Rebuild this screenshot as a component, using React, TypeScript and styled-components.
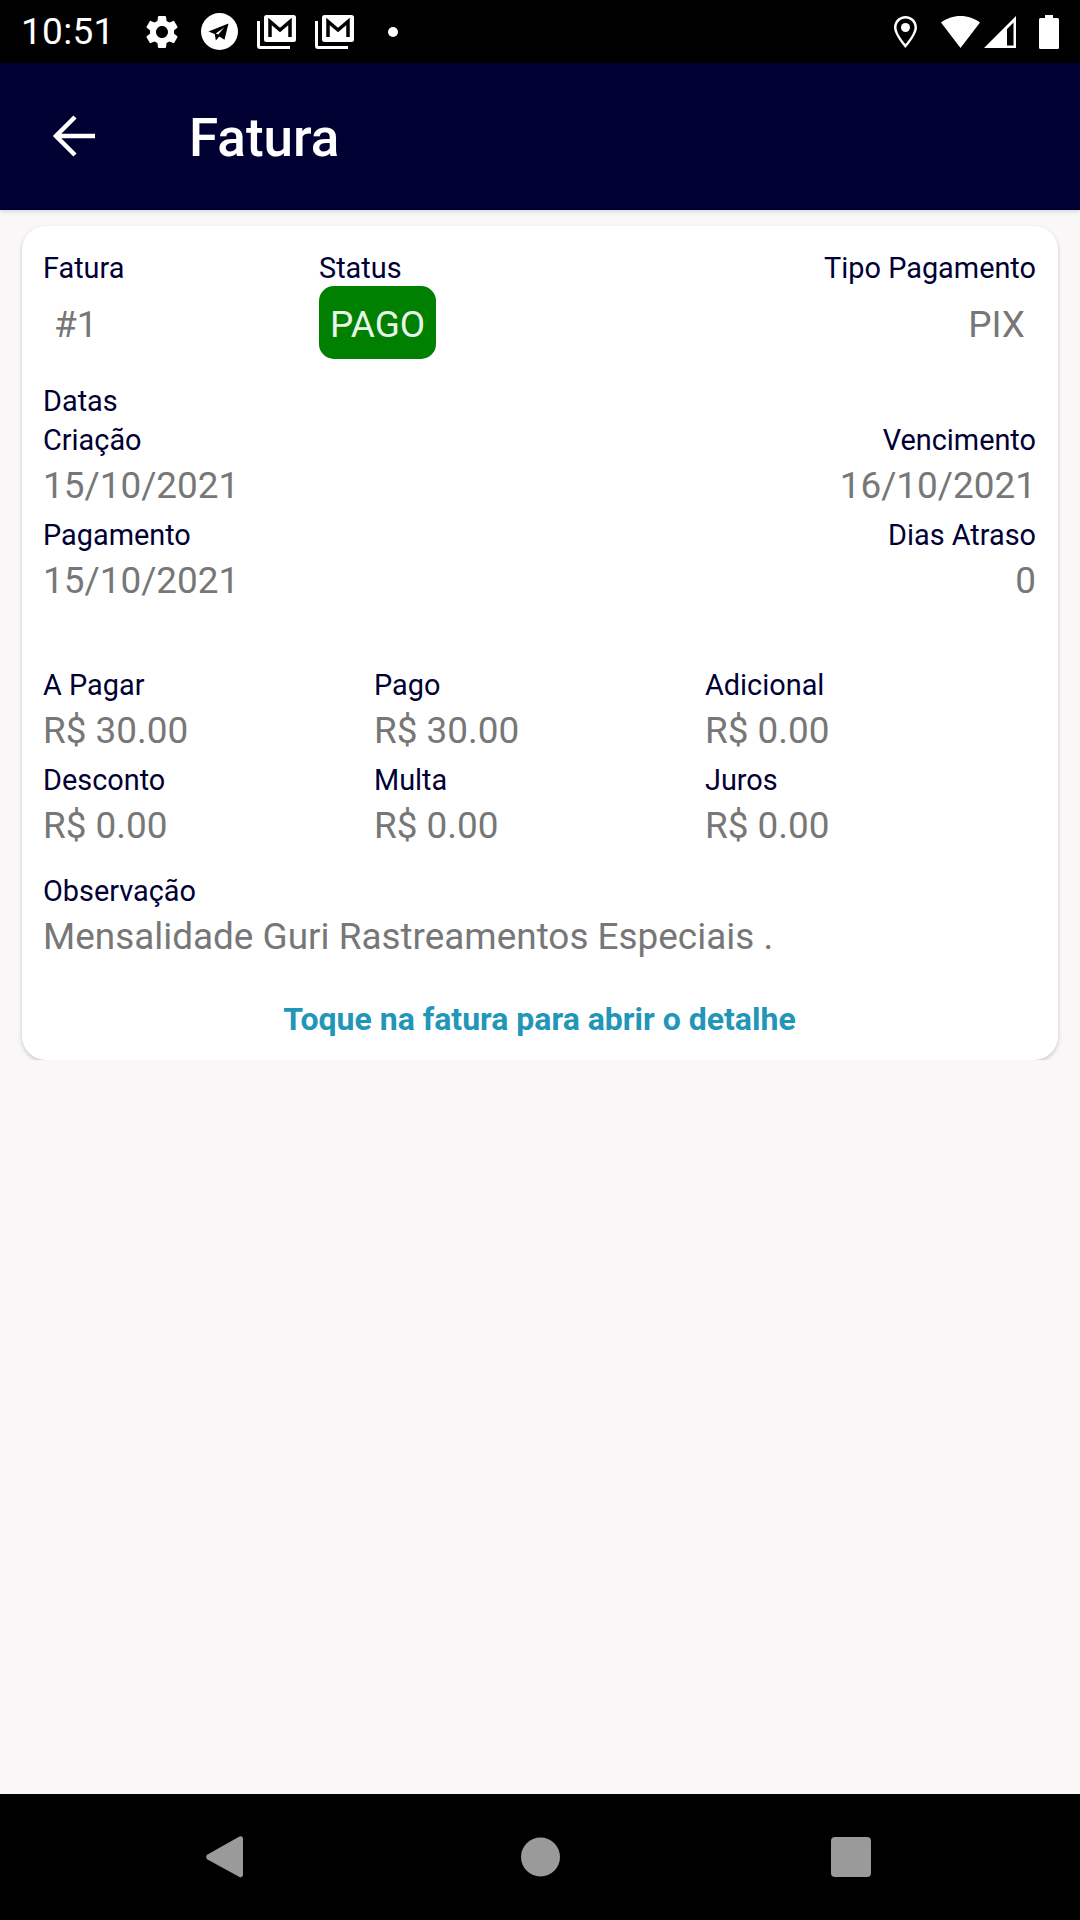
import React from "react";
import styled, { createGlobalStyle } from "styled-components";

const Global = createGlobalStyle`
  html, body { margin: 0; padding: 0; background: #f9f7f8; }
  body { font-family: Roboto, "Liberation Sans", sans-serif; }
`;

const Screen = styled.div`
  width: 1080px;
  height: 1920px;
  display: flex;
  flex-direction: column;
  background: #f9f7f8;
  overflow: hidden;
`;

const StatusBar = styled.div`
  height: 63px;
  flex: none;
  background: #000;
  color: #fff;
  display: flex;
  align-items: center;
  padding: 0 21px 0 21px;
  box-sizing: border-box;
`;

const Clock = styled.span`
  font-size: 37px;
  line-height: 63px;
  width: 121px;
  letter-spacing: 0.3px;
`;

const StatusGroup = styled.div<{ $gap: number }>`
  display: flex;
  align-items: center;
  gap: ${(p) => p.$gap}px;
`;

const Spacer = styled.div`
  flex: 1;
`;

const NotifDot = styled.span`
  width: 10px;
  height: 10px;
  margin-left: 34px;
  border-radius: 50%;
  background: #fff;
`;

const Header = styled.header`
  height: 147px;
  flex: none;
  background: #000033;
  color: #fff;
  display: flex;
  align-items: center;
  padding-left: 53px;
  box-shadow: 0 2px 4px rgba(0, 0, 0, 0.12);
  z-index: 1;
`;

const BackIcon = styled.svg`
  width: 42px;
  height: 42px;
  margin-right: 94px;
  margin-top: -2px;
`;

const Title = styled.h1`
  margin: 2px 0 0;
  font-size: 53px;
  font-weight: 500;
  line-height: 62px;
`;

const Main = styled.main`
  flex: 1;
  padding: 16px 22px 0;
`;

const Card = styled.section`
  height: 834px;
  box-sizing: border-box;
  background: #fff;
  border-radius: 24px;
  padding: 23px 22px 0 21px;
  box-shadow: 0 2px 4px rgba(0, 0, 0, 0.2);
  clip-path: inset(-8px -8px 0 -8px round 0);
`;

const TopRow = styled.div`
  display: grid;
  grid-template-columns: 276px auto 1fr;
  height: 133px;
`;

const Column = styled.div<{ $end?: boolean }>`
  display: flex;
  flex-direction: column;
  align-items: ${(p) => (p.$end ? "flex-end" : "flex-start")};
`;

const Label = styled.div`
  font-size: 28.875px;
  line-height: 39px;
  color: #000033;
  white-space: nowrap;
`;

const Value = styled.div<{ $inset?: boolean }>`
  font-size: 36.9px;
  line-height: 51px;
  color: #777777;
  white-space: nowrap;
  ${(p) => p.$inset && "padding: 11px 11px 11px 11px;"}
`;

const Badge = styled.div`
  margin-top: -2px;
  height: 73px;
  box-sizing: border-box;
  padding: 3px 11px 0;
  display: flex;
  align-items: center;
  background: #008000;
  border-radius: 15px;
  color: #e8f5e8;
  font-size: 36.9px;
`;

const SplitRow = styled.div`
  display: flex;
  justify-content: space-between;
  margin-bottom: 5px;
`;

const ThreeCol = styled.div`
  display: grid;
  grid-template-columns: 331px 331px 1fr;
  margin-bottom: 5px;
`;

const AmountBlock = styled.div`
  margin-top: 60px;
`;

const Note = styled.div`
  margin-top: 21px;
`;

const Hint = styled.div`
  margin-top: 38px;
  text-align: center;
  font-size: 32px;
  font-weight: 700;
  line-height: 38px;
  color: #2196b8;
`;

const NavBar = styled.nav`
  height: 126px;
  flex: none;
  background: #000;
  display: flex;
  justify-content: space-between;
  align-items: center;
  padding: 0 169px 0 166px;
  box-sizing: border-box;
`;

const NavIcon = styled.svg`
  width: 120px;
  height: 60px;
  fill: #9a9a9a;
  stroke: none;
`;

const White = styled.svg<{ $w: number; $h: number }>`
  width: ${(p) => p.$w}px;
  height: ${(p) => p.$h}px;
  flex: none;
  fill: #fff;
`;

const Gap = styled.span<{ $w: number }>`
  width: ${(p) => p.$w}px;
`;

const GEAR =
  "M19.14,12.94c0.04-0.3,0.06-0.61,0.06-0.94c0-0.32-0.02-0.64-0.07-0.94l2.03-1.58c0.18-0.14,0.23-0.41,0.12-0.61l-1.92-3.32c-0.12-0.22-0.37-0.29-0.59-0.22l-2.39,0.96c-0.5-0.38-1.03-0.7-1.62-0.94L14.4,2.81c-0.04-0.24-0.24-0.41-0.48-0.41h-3.84c-0.24,0-0.43,0.17-0.47,0.41L9.25,5.35C8.66,5.59,8.12,5.92,7.63,6.29L5.24,5.33c-0.22-0.08-0.47,0-0.59,0.22L2.74,8.87C2.62,9.08,2.66,9.34,2.86,9.48l2.03,1.58C4.84,11.36,4.8,11.69,4.8,12s0.02,0.64,0.07,0.94l-2.03,1.58c-0.18,0.14-0.23,0.41-0.12,0.61l1.92,3.32c0.12,0.22,0.37,0.29,0.59,0.22l2.39-0.96c0.5,0.38,1.03,0.7,1.62,0.94l0.36,2.54c0.05,0.24,0.24,0.41,0.48,0.41h3.84c0.24,0,0.44-0.17,0.47-0.41l0.36-2.54c0.59-0.24,1.13-0.56,1.62-0.94l2.39,0.96c0.22,0.08,0.47,0,0.59-0.22l1.92-3.32c0.12-0.22,0.07-0.47-0.12-0.61L19.14,12.94z M12,15.6c-1.98,0-3.6-1.62-3.6-3.6s1.62-3.6,3.6-3.6s3.6,1.62,3.6,3.6S13.98,15.6,12,15.6z";

const Gear = () => (
  <White $w={40} $h={40} viewBox="0 0 24 24">
    <path d={GEAR} />
  </White>
);

const Telegram = () => (
  <White $w={37} $h={37} viewBox="0 0 37 37">
    <path
      fillRule="evenodd"
      d="M18.5 0a18.5 18.5 0 1 0 0 37a18.5 18.5 0 0 0 0-37z M27.5 10.5L7.5 18.5l6.2 2.4 1.2 6.6 3.4-4 5.2 3.2z M14.8 20.6l8.4-6.2-6 7.2z"
    />
  </White>
);

const MailStack = () => (
  <White $w={39} $h={34} viewBox="0 0 39 34">
    <rect x="7" y="0" width="32" height="27" rx="2.500" />
    <path d="M13 22V6.500l10 8.500 10-8.500V22" fill="none" stroke="#000" strokeWidth="3.500" strokeLinejoin="miter" />
    <path d="M0 6h3v25h30v3H3a3 3 0 0 1-3-3z" />
  </White>
);

const Pin = () => (
  <White $w={23} $h={32} viewBox="0 0 23 32">
    <path
      fillRule="evenodd"
      d="M11.500 0C5 0 0 5 0 11.500C0 19 11.500 32 11.500 32S23 19 23 11.500C23 5 18 0 11.500 0z M11.500 2.500c5 0 9 4 9 9c0 5-6 13.500-9 16.500c-3-3-9-11.500-9-16.500c0-5 4-9 9-9z"
    />
    <circle cx="11.500" cy="11.500" r="4.500" />
  </White>
);

const Wifi = () => (
  <White $w={39} $h={32} viewBox="0 0 39 32">
    <path d="M19.500 0C12 0 5.500 2.500 0 6.500L19.500 32L39 6.500C33.500 2.500 27 0 19.500 0z" />
  </White>
);

const Signal = () => (
  <White $w={32} $h={32} viewBox="0 0 32 32">
    <path fillRule="evenodd" d="M32 0V32H0z M29.500 6.500L23 13V29.500H29.500z" />
  </White>
);

const Battery = () => (
  <White $w={20} $h={34} viewBox="0 0 20 34">
    <path d="M6 0h8v3h4.500a1.500 1.500 0 0 1 1.500 1.500v28a1.500 1.500 0 0 1-1.500 1.500H1.500A1.500 1.500 0 0 1 0 32.500v-28A1.500 1.500 0 0 1 1.500 3H6z" />
  </White>
);

const Field = ({ label, value, end }: { label: string; value: string; end?: boolean }) => (
  <Column $end={end}>
    <Label>{label}</Label>
    <Value>{value}</Value>
  </Column>
);

export default function App() {
  return (
    <>
      <Global />
      <Screen>
        <StatusBar>
          <Clock>10:51</Clock>
          <StatusGroup $gap={19}>
            <Gear />
            <Telegram />
            <MailStack />
            <MailStack />
          </StatusGroup>
          <NotifDot />
          <Spacer />
          <StatusGroup $gap={4}>
            <Pin />
            <Gap $w={16} />
            <Wifi />
            <Signal />
            <Gap $w={15} />
            <Battery />
          </StatusGroup>
        </StatusBar>
        <Header>
          <BackIcon viewBox="0 0 42 42" fill="none" stroke="#fff" strokeWidth="4.500">
            <path d="M42 21H4M22 2L3 21l19 19" />
          </BackIcon>
          <Title>Fatura</Title>
        </Header>
        <Main>
          <Card>
            <TopRow>
              <Column>
                <Label>Fatura</Label>
                <Value $inset>#1</Value>
              </Column>
              <Column>
                <Label>Status</Label>
                <Badge>PAGO</Badge>
              </Column>
              <Column $end>
                <Label>Tipo Pagamento</Label>
                <Value $inset>PIX</Value>
              </Column>
            </TopRow>
            <Label>Datas</Label>
            <SplitRow>
              <Field label="Criação" value="15/10/2021" />
              <Field label="Vencimento" value="16/10/2021" end />
            </SplitRow>
            <SplitRow>
              <Field label="Pagamento" value="15/10/2021" />
              <Field label="Dias Atraso" value="0" end />
            </SplitRow>
            <AmountBlock>
              <ThreeCol>
                <Field label="A Pagar" value="R$ 30.00" />
                <Field label="Pago" value="R$ 30.00" />
                <Field label="Adicional" value="R$ 0.00" />
              </ThreeCol>
              <ThreeCol>
                <Field label="Desconto" value="R$ 0.00" />
                <Field label="Multa" value="R$ 0.00" />
                <Field label="Juros" value="R$ 0.00" />
              </ThreeCol>
            </AmountBlock>
            <Note>
              <Field label="Observação" value="Mensalidade Guri Rastreamentos Especiais ." />
            </Note>
            <Hint>Toque na fatura para abrir o detalhe</Hint>
          </Card>
        </Main>
        <NavBar>
          <NavIcon viewBox="0 0 120 60">
            <path d="M41.500 27.500L73.500 9.500a2.500 2.500 0 0 1 3.500 2V48a2.500 2.500 0 0 1-3.500 2L41.500 32.500a3 3 0 0 1 0-5z" />
          </NavIcon>
          <NavIcon viewBox="0 0 120 60">
            <circle cx="61.500" cy="30" r="19.500" />
          </NavIcon>
          <NavIcon viewBox="0 0 120 60">
            <rect x="40" y="10" width="40" height="40" rx="4" />
          </NavIcon>
        </NavBar>
      </Screen>
    </>
  );
}
